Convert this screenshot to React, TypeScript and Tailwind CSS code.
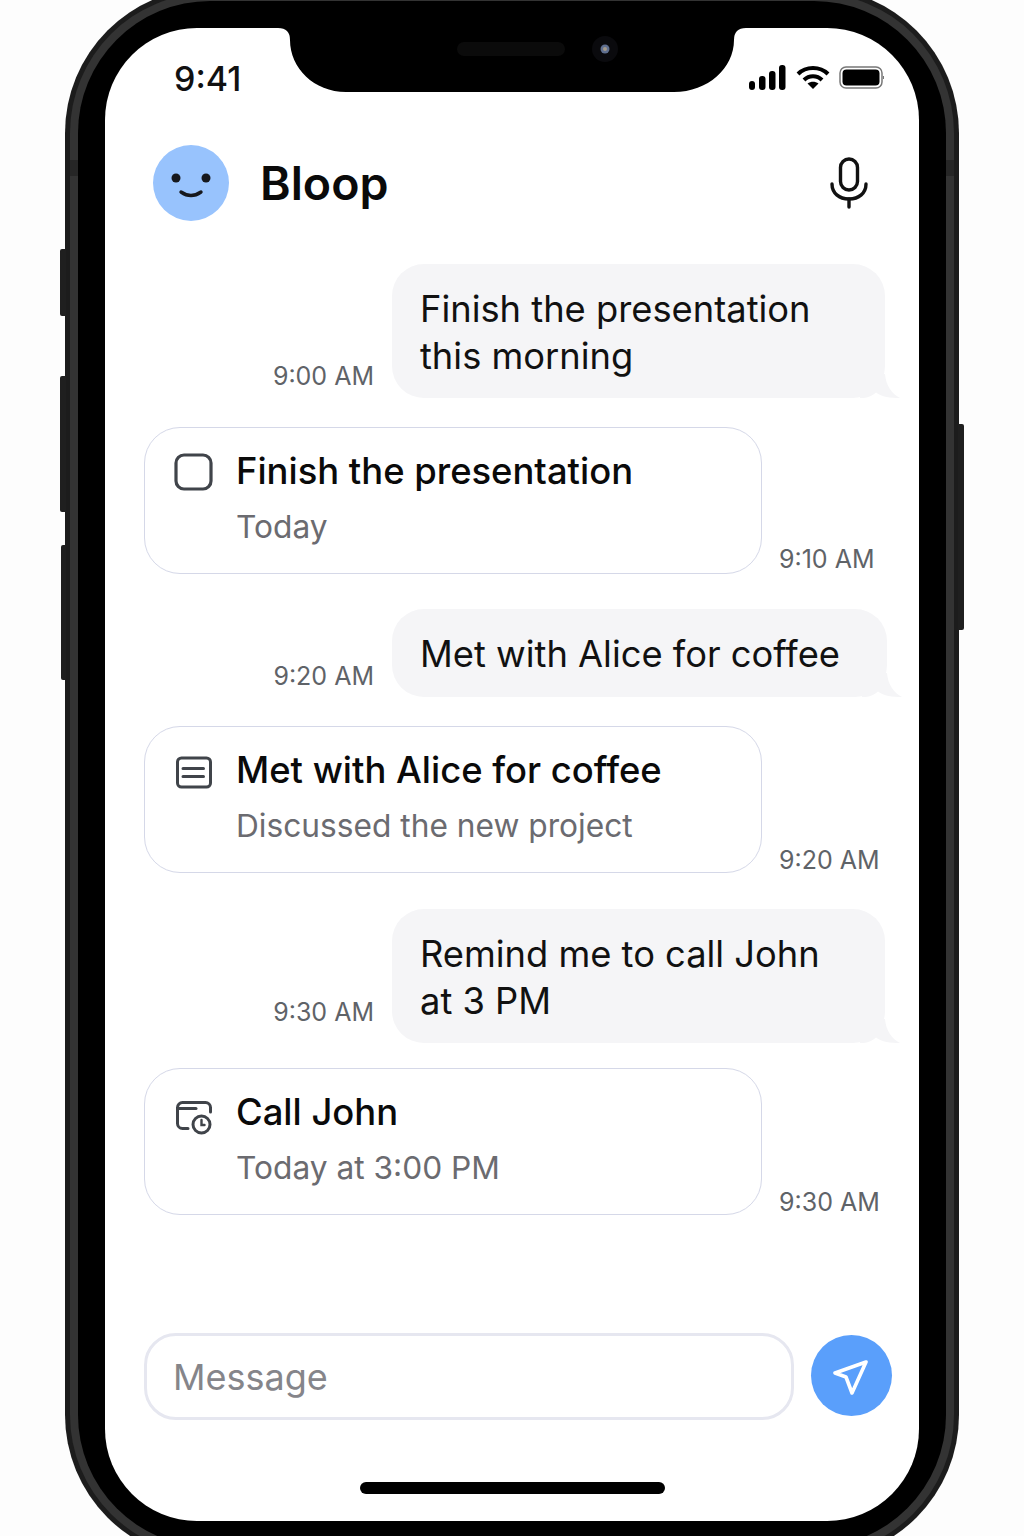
import React from 'react';

const sans = "font-['Inter',sans-serif]";

const Tail = () => (
  <svg className="absolute right-[-15px] bottom-0" width="40" height="24" viewBox="0 0 40 24" fill="#f5f5f7">
    <path d="M0 24 C 8 24 12 22 16 18.5 C 22 23 30 24 40 24 C 32 20 26 12 25 0 L 0 0 Z" />
  </svg>
);

const Stamp = ({ children, className = '' }: { children: React.ReactNode; className?: string }) => (
  <span className={`text-[25px] leading-[32px] text-[#5f6368] whitespace-nowrap ${className}`}>{children}</span>
);

const Bubble = ({
  time,
  lines,
  className = '',
  size = 'w-[493px]',
  stamp = 'mb-[6px]',
}: {
  time: string;
  lines: string[];
  className?: string;
  size?: string;
  stamp?: string;
}) => (
  <div className={`flex justify-end items-end pr-[34px] gap-[18px] ${className}`}>
    <Stamp className={stamp}>{time}</Stamp>
    <div className={`relative ${size} min-h-[88px] rounded-[32px] bg-[#f5f5f7] pl-[28px] pt-[22px] pb-[19px] text-[36.3px] leading-[46.5px] text-[#111]`}>
      {lines.map((l) => (
        <div key={l}>{l}</div>
      ))}
      <Tail />
    </div>
  </div>
);

const Card = ({
  icon,
  title,
  sub,
  time,
  className = '',
  stamp = '',
}: {
  icon: React.ReactNode;
  title: string;
  sub: string;
  time: string;
  className?: string;
  stamp?: string;
}) => (
  <div className={`flex items-end pl-[39px] ${className}`}>
    <div className="flex w-[618px] h-[147px] rounded-[36px] border-[1.5px] border-[#d5d8e8] bg-white pl-[29px] pt-[19px]">
      <div className="w-[62px] shrink-0 pt-[6px]">{icon}</div>
      <div>
        <div className="text-[36.4px] leading-[48px] font-medium text-[#0a0a0a] whitespace-nowrap">{title}</div>
        <div className="mt-[12px] text-[31.7px] leading-[40px] text-[#6b6b70] whitespace-nowrap">{sub}</div>
      </div>
    </div>
    <Stamp className={`ml-[17px] ${stamp}`}>{time}</Stamp>
  </div>
);

const CheckIcon = () => (
  <svg width="40" height="40" viewBox="0 0 40 40" fill="none" stroke="#40444a" strokeWidth="3.2">
    <rect x="2" y="2" width="35" height="34" rx="8" />
  </svg>
);

const NoteIcon = () => (
  <svg width="40" height="40" viewBox="0 0 40 40" fill="none" stroke="#40444a" strokeWidth="3" strokeLinecap="round">
    <rect x="3.5" y="6" width="33" height="29" rx="4" />
    <path d="M9 16.5H29.5M9 24.5H29.5" />
  </svg>
);

const ClockCalIcon = () => (
  <svg width="40" height="44" viewBox="0 0 40 44" fill="none" stroke="#40444a" strokeWidth="3" strokeLinecap="round">
    <path d="M14 34.5 H8.5 a5 5 0 0 1 -5 -5 V13.5 a5 5 0 0 1 5 -5 H31.5 a5 5 0 0 1 5 5 V18" />
    <path d="M3.5 14.5 H22" />
    <circle cx="27.5" cy="30.5" r="8.5" />
    <path d="M27.5 26 V31 H30.5" strokeWidth="2.4" />
  </svg>
);

export default function App() {
  return (
    <div className={`w-[1024px] h-[1536px] overflow-hidden bg-[#fdfdfd] ${sans}`}>
      {/* phone body */}
      <div className="relative ml-[65px] -mt-[12px] w-[894px] h-[1572px] rounded-[145px] bg-[#1c1c1c] p-[5px]">
        <div className="absolute left-[-5px] top-[261px] w-[6px] h-[67px] rounded-l-[2px] bg-[#1f1f1f]" />
        <div className="absolute left-[-5px] top-[388px] w-[6px] h-[136px] rounded-l-[2px] bg-[#1f1f1f]" />
        <div className="absolute left-[-4px] top-[557px] w-[5px] h-[135px] rounded-l-[2px] bg-[#1f1f1f]" />
        <div className="absolute right-[-5px] top-[436px] w-[6px] h-[206px] rounded-r-[2px] bg-[#1f1f1f]" />

        <div className="relative h-full rounded-[140px] bg-[#333333] p-[8px]">
          {/* antenna bands */}
          <div className="absolute left-0 top-[167px] w-[8px] h-[16px] bg-[#262626]" />
          <div className="absolute right-0 top-[167px] w-[8px] h-[16px] bg-[#262626]" />
          <div className="h-full rounded-[132px] bg-black p-[27px]">
            {/* screen */}
            <div className="relative flex flex-col h-[1493px] w-[814px] rounded-[92px] bg-white overflow-hidden">
              {/* notch */}
              <svg className="absolute left-[173px] top-0" width="468" height="64" viewBox="0 0 468 64" fill="#000">
                <path d="M0 0 Q12 0 12 12 C12 40 36 64 68 64 H396 C430 64 456 40 456 12 Q456 0 468 0 Z" />
                <rect x="179" y="14" width="108" height="14" rx="7" fill="#0b0b0b" />
                <circle cx="327" cy="21" r="13" fill="#0a0a0d" />
                <circle cx="327" cy="21" r="4.5" fill="#5f6f8f" />
                <circle cx="327" cy="21" r="2" fill="#a59a8a" />
              </svg>

              {/* status bar */}
              <div className="flex items-center justify-between pl-[69px] pr-[35px] pt-[30px] h-[71px]">
                <span className="text-[34px] leading-[42px] font-medium text-[#111]">9:41</span>
                <div className="flex items-center gap-[9.5px] -mt-[2px]">
                  <svg width="37" height="25" viewBox="0 0 37 25" fill="#000">
                    <rect x="0" y="16" width="6" height="9" rx="3" />
                    <rect x="10" y="11" width="6.5" height="14" rx="3" />
                    <rect x="20" y="6" width="6.5" height="19" rx="3" />
                    <rect x="30" y="0" width="6.5" height="25" rx="3" />
                  </svg>
                  <svg width="34" height="25" viewBox="0 0 34 25" fill="none" stroke="#000" strokeWidth="4">
                    <path d="M2 9 C 10 1 24 1 32 9" />
                    <path d="M8 15 C 13 10 21 10 26 15" />
                    <path d="M17 24 L11.5 18.5 C 15 16 19 16 22.5 18.5 Z" fill="#000" stroke="none" />
                  </svg>
                  <svg width="45" height="23" viewBox="0 0 45 23" fill="none">
                    <rect x="1" y="1" width="42" height="21" rx="6" stroke="#777" strokeWidth="1.5" />
                    <rect x="3.5" y="3.5" width="37" height="16" rx="4" fill="#000" />
                    <rect x="44" y="10" width="1" height="3" fill="#777" />
                  </svg>
                </div>
              </div>

              {/* header */}
              <div className="flex items-center justify-between pl-[48px] pr-[51px] mt-[46px]">
                <div className="flex items-center gap-[31px]">
                  <div className="w-[76px] h-[76px] rounded-full bg-[#98c3fd]">
                    <svg width="76" height="76" viewBox="0 0 76 76" fill="none">
                      <circle cx="23" cy="33" r="4.5" fill="#16181d" />
                      <circle cx="53" cy="33" r="4.5" fill="#16181d" />
                      <path d="M28 47 Q38 54 48 47" stroke="#16181d" strokeWidth="3.4" strokeLinecap="round" />
                    </svg>
                  </div>
                  <span className="text-[46.5px] leading-[58px] font-semibold text-[#0a0a0a]">Bloop</span>
                </div>
                <svg width="38" height="52" viewBox="0 0 38 52" fill="none" stroke="#111" strokeWidth="3.4" strokeLinecap="round">
                  <rect x="10.5" y="2" width="17" height="31" rx="8.5" />
                  <path d="M2 27 C 2 36 9 42 19 42 C 29 42 36 36 36 27" />
                  <path d="M19 42 V50" />
                </svg>
              </div>

              {/* conversation */}
              <Bubble className="mt-[43px]" time="9:00 AM" lines={['Finish the presentation', 'this morning']} />
              <Card className="mt-[29px]" stamp="-mb-[1px]" icon={<CheckIcon />} title="Finish the presentation" sub="Today" time="9:10 AM" />
              <Bubble className="mt-[35px]" stamp="mb-[5px]" size="w-[495px] -mr-[2px]" time="9:20 AM" lines={['Met with Alice for coffee']} />
              <Card className="mt-[29px]" stamp="-mb-[3px]" icon={<NoteIcon />} title="Met with Alice for coffee" sub="Discussed the new project" time="9:20 AM" />
              <Bubble className="mt-[36px]" stamp="mb-[15px]" time="9:30 AM" lines={['Remind me to call John', 'at 3 PM']} />
              <Card className="mt-[25px]" stamp="-mb-[3px]" icon={<ClockCalIcon />} title="Call John" sub="Today at 3:00 PM" time="9:30 AM" />

              {/* input */}
              <div className="flex items-center pl-[39px] mt-[118px] gap-[17px]">
                <div className="flex items-center w-[650px] h-[87px] rounded-[32px] border-[3px] border-[#e6e7f0] pl-[26px] text-[36px] text-[#85858a]">
                  Message
                </div>
                <div className="flex items-center justify-center w-[81px] h-[81px] -mt-[3px] rounded-full bg-[#5a9ffb]">
                  <svg width="40" height="40" viewBox="0 0 40 40" fill="none" stroke="#fff" strokeWidth="3.6" strokeLinejoin="round" strokeLinecap="round">
                    <path d="M34 7 L3 18 L14 22 L20 38 Z" />
                  </svg>
                </div>
              </div>

              {/* home indicator */}
              <div className="mt-[62px] ml-[255px] w-[305px] h-[12px] rounded-full bg-black" />
            </div>
          </div>
        </div>
      </div>
    </div>
  );
}
